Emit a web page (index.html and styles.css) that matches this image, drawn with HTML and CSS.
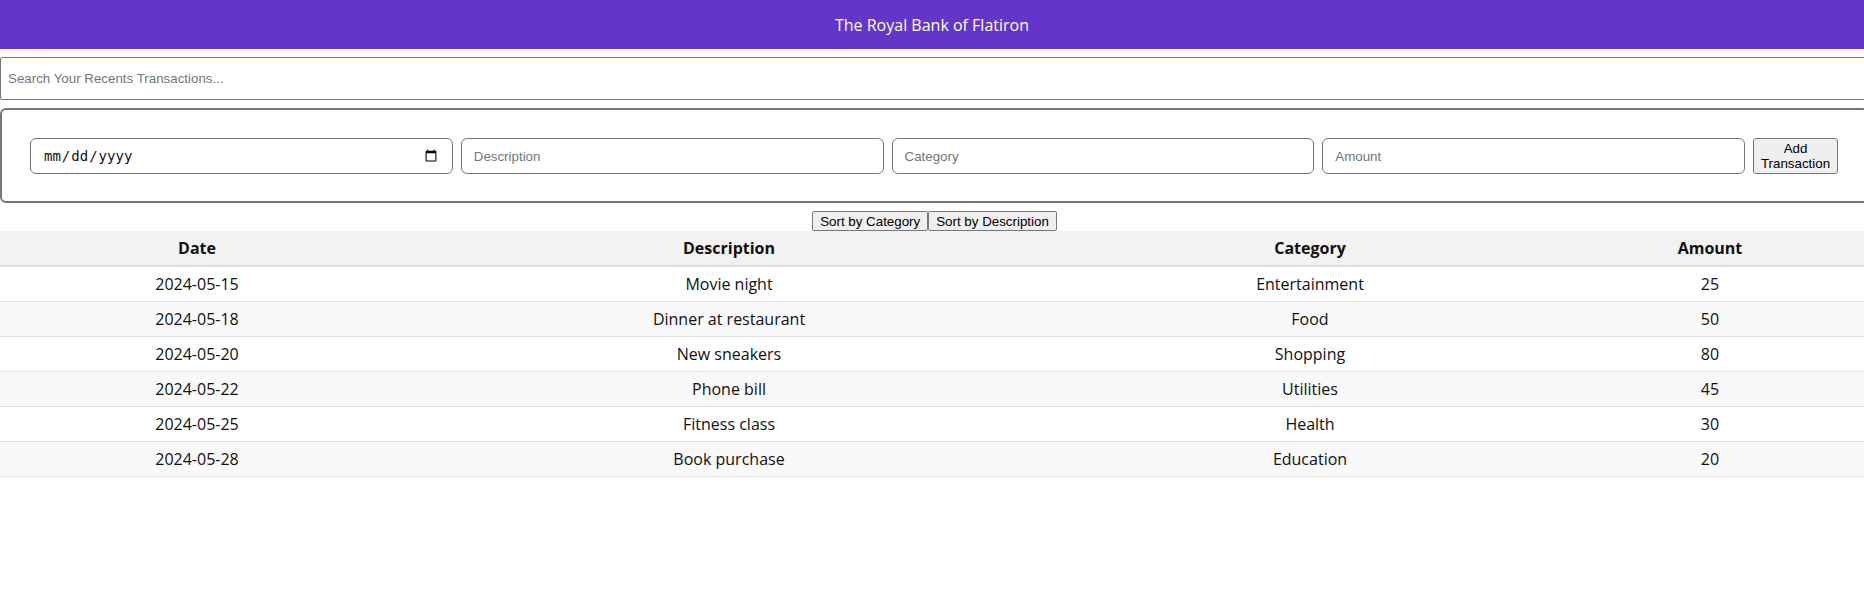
FILE: index.html
```html
<!DOCTYPE html>
<html lang="en">
<head>
<meta charset="utf-8">
<title>The Royal Bank of Flatiron</title>
<link rel="stylesheet" href="styles.css">
</head>
<body>
<header class="topbar">
  <h2 class="title">The Royal Bank of Flatiron</h2>
</header>
<div class="search-wrap">
  <input class="search" type="text" placeholder="Search Your Recents Transactions...">
</div>
<div class="form-box">
  <form class="fields">
    <input class="field field-date" type="date" name="date">
    <input class="field" type="text" name="description" placeholder="Description">
    <input class="field" type="text" name="category" placeholder="Category">
    <input class="field" type="number" name="amount" placeholder="Amount" step="0.01">
    <button class="add-btn" type="submit">Add Transaction</button>
  </form>
</div>
<div class="sort-bar"><button class="sort-btn" type="button">Sort by Category</button><button class="sort-btn" type="button">Sort by Description</button></div>
<table class="tx-table">
  <colgroup>
    <col class="col-date">
    <col class="col-desc">
    <col class="col-cat">
    <col class="col-amt">
  </colgroup>
  <thead>
    <tr><th>Date</th><th>Description</th><th>Category</th><th>Amount</th></tr>
  </thead>
  <tbody>
    <tr><td>2024-05-15</td><td>Movie night</td><td>Entertainment</td><td>25</td></tr>
    <tr><td>2024-05-18</td><td>Dinner at restaurant</td><td>Food</td><td>50</td></tr>
    <tr><td>2024-05-20</td><td>New sneakers</td><td>Shopping</td><td>80</td></tr>
    <tr><td>2024-05-22</td><td>Phone bill</td><td>Utilities</td><td>45</td></tr>
    <tr><td>2024-05-25</td><td>Fitness class</td><td>Health</td><td>30</td></tr>
    <tr><td>2024-05-28</td><td>Book purchase</td><td>Education</td><td>20</td></tr>
  </tbody>
</table>
</body>
</html>
```
FILE: styles.css
```css
html, body {
  overflow-x: hidden;
}
body {
  margin: 0;
  font-family: "Open Sans", "Noto Sans", sans-serif;
  font-size: 16px;
  color: #111;
  background: #fff;
}
.topbar {
  height: 49px;
  background: #6435c9;
  display: flex;
  align-items: center;
  justify-content: center;
}
.title {
  margin: 0;
  font-size: 16px;
  font-weight: 400;
  color: #fff;
}
.search-wrap {
  margin-top: 8px;
  width: calc(100% + 20px);
}
.search {
  display: block;
  box-sizing: border-box;
  width: 100%;
  height: 43px;
  margin: 0;
  padding: 0 7px;
  border: 1px solid #767676;
  border-radius: 2px;
  font-family: "Liberation Sans", Arial, sans-serif;
  font-size: 13.33px;
}
.search::placeholder,
.field::placeholder {
  color: #757575;
}
.form-box {
  margin-top: 8px;
  margin-right: -4px;
  box-sizing: border-box;
  border: 2px solid #777;
  border-radius: 6px;
  padding: 28px 28px 27px 28px;
}
.fields {
  display: flex;
  gap: 8px;
  margin: 0;
}
.field {
  flex: 1 1 0;
  min-width: 0;
  box-sizing: border-box;
  height: 36px;
  margin: 0;
  padding: 0 12px;
  border: 1px solid #767676;
  border-radius: 6px;
  font-family: "Liberation Sans", Arial, sans-serif;
  font-size: 13.33px;
  color: #111;
  background: #fff;
}
.field-date {
  font-family: "DejaVu Sans Mono", monospace;
  font-size: 14px;
}
.add-btn {
  flex: 0 0 85px;
  width: 85px;
  margin: 0;
  padding: 1px 4px;
  border: 1px solid #767676;
  border-radius: 3px;
  background: #efefef;
  font-family: "Liberation Sans", Arial, sans-serif;
  font-size: 13.33px;
  line-height: 15px;
  color: #000;
}
.sort-bar {
  margin-top: 8px;
  text-align: center;
  padding-left: 5px;
  font-size: 0;
}
.sort-btn {
  display: inline-block;
  box-sizing: border-box;
  height: 20px;
  margin: 0;
  padding: 0 7px;
  border: 1px solid #767676;
  border-radius: 2px;
  background: #efefef;
  font-family: "Liberation Sans", Arial, sans-serif;
  font-size: 13.33px;
  line-height: 15px;
  color: #000;
  vertical-align: top;
}
.tx-table {
  width: 100%;
  border-collapse: collapse;
  table-layout: fixed;
}
.col-date { width: 394px; }
.col-desc { width: 670px; }
.col-cat { width: 492px; }
.col-amt { width: auto; }
.tx-table th,
.tx-table td {
  padding: 8px;
  line-height: 18px;
  text-align: center;
  border-bottom: 1px solid #ddd;
}
.tx-table th {
  background: #f2f2f2;
  font-weight: 700;
  border-bottom: 2px solid #ddd;
}
.tx-table tbody tr:nth-child(even) {
  background: #f9f9f9;
}
```
